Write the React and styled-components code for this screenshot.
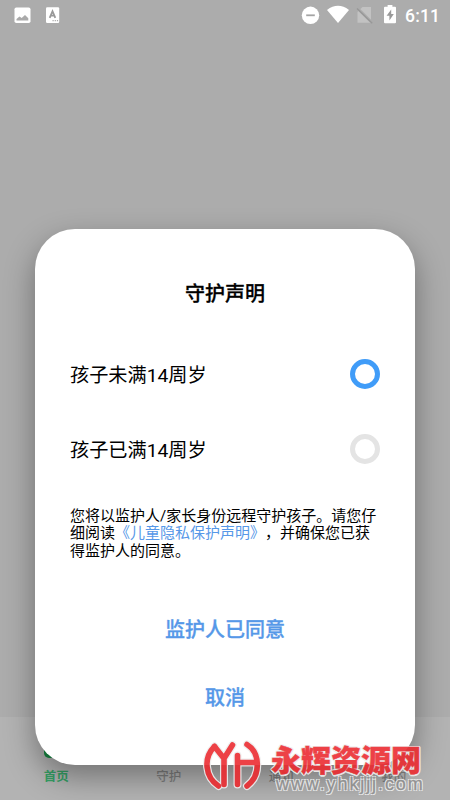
import React from 'react'
import styled, { createGlobalStyle, ThemeProvider } from 'styled-components'

const theme = {
  colors: {
    backdrop: '#acacac',
    nav: '#b3b3b3',
    blue: '#409cf8',
    link: '#5698e8',
    green: '#36a066',
    muted: '#7e7e7e',
    ring: '#e4e4e4'
  }
}

const tabs = ['首页', '守护', '通知', '我的']

const StatusBar = () => (
  <StyledStatusBar>
    <svg width="70" height="32" viewBox="0 0 70 32">
      <rect x="14.5" y="7.5" width="16" height="15.5" rx="1.8" fill="#fff" />
      <path d="M16.5 20.5v-1.6l3-2.4 2.2 1.6L25 15l3.3 3.3v2.2z" fill="#aaa" />
      <rect x="46" y="7.3" width="13.2" height="15.7" rx="1.2" fill="#fff" />
      <path
        d="M49.7 17.8l2.8-6.6 2.8 6.6M50.7 15.6h3.6"
        fill="none"
        stroke="#999"
        strokeWidth="1.8"
      />
      <path d="M52.5 20.7h6" stroke="#aaa" strokeWidth="1.2" strokeDasharray="1.2 1" />
    </svg>
    <Signals>
      <svg width="108" height="32" viewBox="300 0 108 32">
        <circle cx="310.5" cy="15.3" r="8.7" fill="#fff" />
        <path d="M306.2 15.3h8.6" stroke="#a4a4a4" strokeWidth="1.8" />
        <path d="M327 10q11-8.3 22 0L338 23z" fill="#fff" />
        <path d="M362.5 7H371v15.8h-13.5V12z" fill="#c2c2c2" />
        <path d="M356.5 7.2l15.7 15.6" stroke="#acacac" strokeWidth="2.8" />
        <path d="M357 8.5l15.2 14.7" stroke="#979797" strokeWidth="1.3" />
        <path
          d="M385 6.8h2.6V5h4.8v1.8h2.6q1 0 1 1v14.4q0 1-1 1h-10q-1 0-1-1V7.8q0-1 1-1z"
          fill="#fff"
        />
        <path d="M391.2 9.5l-4.6 6.2h2.8v4.8l4.4-6.4h-2.6z" fill="#999" />
      </svg>
      <Clock>6:11</Clock>
    </Signals>
  </StyledStatusBar>
)

const Option = ({ label, checked }) => (
  <StyledOption>
    <Label>{label}</Label>
    <Ring $checked={checked} />
  </StyledOption>
)

const Brand = () => (
  <StyledBrand>
    <svg width="64" height="58" viewBox="0 0 64 58" fill="none" strokeLinecap="round">
      {[
        ['#eee', 8],
        ['#ec2d32', 5.6]
      ].map(([stroke, width]) => (
        <g key={stroke} stroke={stroke} strokeWidth={width}>
          <path d="M14.5 10.5C3 22 5 41 18.5 50" />
          <path d="M14.5 10.5L24 22.5 32.5 9M24 22.5V48.5" />
          <path d="M37.5 19.5V48.5M37.5 26.5H56" />
          <path d="M47 8.5C60.5 17 61 39.5 47 50" />
        </g>
      ))}
    </svg>
    <BrandText>
      <BrandName>永辉资源网</BrandName>
      <BrandUrl>www.yhkjjj.com</BrandUrl>
    </BrandText>
  </StyledBrand>
)

export default function App() {
  return (
    <ThemeProvider theme={theme}>
      <GlobalStyle />
      <Screen>
        <StatusBar />
        <Nav>
          {tabs.map((tab, i) => (
            <Tab key={tab} $active={i === 0}>
              {i === 0 && <TabMark />}
              {tab}
            </Tab>
          ))}
        </Nav>
        <Dialog>
          <Title>守护声明</Title>
          <Option label="孩子未满14周岁" checked />
          <Option label="孩子已满14周岁" />
          <Notice>
            您将以监护人/家长身份远程守护孩子。请您仔
            <br />
            细阅读<Link>《儿童隐私保护声明》</Link>，并确保您已获
            <br />
            得监护人的同意。
          </Notice>
          <Action>监护人已同意</Action>
          <Action>取消</Action>
        </Dialog>
        <Brand />
      </Screen>
    </ThemeProvider>
  )
}

const GlobalStyle = createGlobalStyle`
  * {
    box-sizing: border-box;
  }
  body {
    margin: 0;
    font-family: Roboto, 'Noto Sans CJK SC', sans-serif;
    text-spacing-trim: space-all;
  }
`
const Screen = styled.div`
  background: ${props => props.theme.colors.backdrop};
  display: flex;
  flex-direction: column;
  height: 800px;
  justify-content: space-between;
  overflow: hidden;
  position: relative;
  width: 450px;
`
const StyledStatusBar = styled.div`
  display: flex;
  height: 32px;
  justify-content: space-between;
`
const Signals = styled.div`
  align-items: center;
  display: flex;
  width: 150px;
`
const Clock = styled.span`
  color: #fff;
  font-size: 17.5px;
  font-weight: 500;
  letter-spacing: 0.2px;
  margin-left: -3px;
`
const Nav = styled.div`
  background: ${props => props.theme.colors.nav};
  display: flex;
  height: 83px;
`
const Tab = styled.div`
  align-items: center;
  color: ${props => (props.$active ? props.theme.colors.green : props.theme.colors.muted)};
  display: flex;
  flex: 1;
  flex-direction: column;
  font-size: 12.5px;
  font-weight: ${props => (props.$active ? 700 : 500)};
  justify-content: flex-end;
  line-height: 18px;
  padding-bottom: 14px;
`
const TabMark = styled.span`
  background: #168a43;
  border-radius: 5px;
  height: 24px;
  margin-bottom: 10px;
  width: 24px;
`
const Dialog = styled.div`
  background: #fff;
  border-radius: 40px;
  box-shadow: 0 12px 30px rgba(0, 0, 0, 0.36);
  display: flex;
  flex-direction: column;
  height: 536px;
  left: 35px;
  padding: 50px 35px 0;
  position: absolute;
  top: 229px;
  width: 380px;
`
const Title = styled.h1`
  -webkit-text-stroke: 0.3px;
  font-size: 20px;
  font-weight: 500;
  line-height: 30px;
  margin: 0 0 28px;
  text-align: center;
`
const StyledOption = styled.div`
  align-items: center;
  display: flex;
  font-size: 19.2px;
  height: 75px;
  justify-content: space-between;
`
const Label = styled.span`
  padding-bottom: 2px;
`
const Ring = styled.span`
  border: 5px solid
    ${props => (props.$checked ? props.theme.colors.blue : props.theme.colors.ring)};
  border-radius: 50%;
  height: 30px;
  margin-top: -1px;
  width: 30px;
`
const Notice = styled.p`
  font-size: 15px;
  line-height: 17.5px;
  margin: 20.5px 0 0;
  white-space: nowrap;
`
const Link = styled.span`
  color: ${props => props.theme.colors.link};
`
const Action = styled.button`
  -webkit-text-stroke: 0.3px;
  background: none;
  border: 0;
  color: ${props => props.theme.colors.link};
  font-family: inherit;
  font-size: 20px;
  font-weight: 500;
  height: 30px;
  line-height: 30px;
  margin: 54.5px 0 0;
  padding: 0;
  & + & {
    margin-top: 38px;
  }
`
const StyledBrand = styled.div`
  display: flex;
  left: 200px;
  opacity: 0.9;
  position: absolute;
  top: 736px;
`
const BrandText = styled.div`
  display: flex;
  flex-direction: column;
  margin-left: 7px;
  white-space: nowrap;
`
const BrandName = styled.span`
  -webkit-text-stroke: 0.4px #ec2d32;
  color: #ec2d32;
  font-size: 30px;
  font-weight: 900;
  line-height: 50px;
  text-shadow: 1px 1px #eee, -1px 1px #eee, 1px -1px #eee, -1px -1px #eee, 0 1.5px #eee,
    0 -1.5px #eee, 1.5px 0 #eee, -1.5px 0 #eee;
`
const BrandUrl = styled.span`
  -webkit-text-stroke: 0.3px #909090;
  color: #909090;
  font-family: 'Liberation Sans', sans-serif;
  font-size: 18px;
  letter-spacing: 1.9px;
  line-height: 20px;
  margin: -12px 0 0 5px;
  text-shadow: 1px 1px #eee, -1px 1px #eee, 1px -1px #eee, -1px -1px #eee;
`
